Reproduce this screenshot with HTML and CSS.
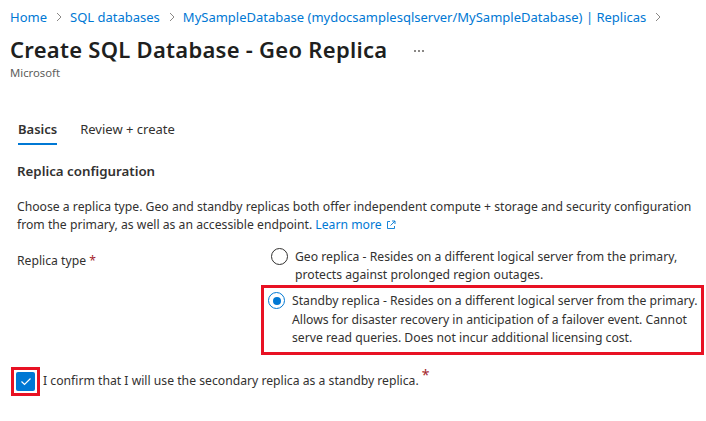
FILE: index.html
```html
<!DOCTYPE html>
<html lang="en">
<head>
<meta charset="utf-8">
<title>Create SQL Database - Geo Replica</title>
<link rel="stylesheet" href="styles.css">
</head>
<body>
<nav class="breadcrumb">
  <a href="#">Home</a>
  <svg class="chev" viewBox="0 0 8 10" width="8" height="10"><polyline points="2,1 6,5 2,9" fill="none" stroke="#8a8886" stroke-width="1"/></svg>
  <a href="#">SQL databases</a>
  <svg class="chev" viewBox="0 0 8 10" width="8" height="10"><polyline points="2,1 6,5 2,9" fill="none" stroke="#8a8886" stroke-width="1"/></svg>
  <a href="#">MySampleDatabase (mydocsamplesqlserver/MySampleDatabase) | Replicas</a>
  <svg class="chev" viewBox="0 0 8 10" width="8" height="10"><polyline points="2,1 6,5 2,9" fill="none" stroke="#8a8886" stroke-width="1"/></svg>
</nav>
<header class="title-row">
  <h1 class="title">Create SQL Database - Geo Replica</h1>
  <span class="more"><i></i><i></i><i></i></span>
</header>
<div class="publisher">Microsoft</div>

<div class="tabs">
  <span class="tab active">Basics</span>
  <span class="tab">Review + create</span>
</div>

<main class="content">
  <h2 class="section-title">Replica configuration</h2>
  <p class="desc">Choose a replica type. Geo and standby replicas both offer independent compute + storage and security configuration from the primary, as well as an accessible endpoint. <a href="#" class="link">Learn more<svg class="ext" viewBox="0 0 10 10" width="10" height="10"><path d="M4 1.5H1.5v7h7V6" fill="none" stroke="#0078d4" stroke-width="0.9"/><path d="M6 1h3v3M9 1L4.5 5.5" fill="none" stroke="#0078d4" stroke-width="0.9"/></svg></a></p>

  <div class="field">
    <div class="label">Replica type <span class="req">*</span></div>
    <div class="options">
      <label class="option">
        <span class="radio"></span>
        <span class="opt-text">Geo replica - Resides on a different logical server from the primary, protects against prolonged region outages.</span>
      </label>
      <label class="option highlight">
        <span class="radio checked"></span>
        <span class="opt-text">Standby replica - Resides on a different logical server from the primary. Allows for disaster recovery in anticipation of a failover event. Cannot serve read queries. Does not incur additional licensing cost.</span>
      </label>
    </div>
  </div>

  <div class="confirm">
    <span class="check-wrap"><span class="checkbox"><svg viewBox="0 0 18 18" width="18" height="18"><polyline points="4.5,9.5 7.5,12.5 13.5,6.5" fill="none" stroke="#fff" stroke-width="1.2"/></svg></span></span>
    <span class="confirm-text">I confirm that I will use the secondary replica as a standby replica.</span><span class="req sup">*</span>
  </div>
</main>
</body>
</html>
```

FILE: styles.css
```css
* { box-sizing: border-box; }
html, body { margin: 0; padding: 0; background: #fff; }
body {
  font-family: "Noto Sans", "Open Sans", sans-serif;
  font-size: 12.2px;
  color: #323130;
  width: 706px;
  height: 421px;
  overflow: hidden;
}
a { color: #0078d4; text-decoration: none; }

.breadcrumb {
  display: flex;
  align-items: center;
  padding: 8px 0 0 10px;
  height: 26px;
  font-size: 13px;
  line-height: 18px;
}
.breadcrumb .chev { margin: 0 7px 0 8px; }

.title-row {
  display: flex;
  align-items: center;
  padding-left: 10px;
  height: 36px;
  margin-top: 5px;
}
.title {
  margin: 0;
  font-size: 22px;
  font-weight: 600;
  letter-spacing: 0.27px;
  color: #201f1e;
  line-height: 30px;
}
.more {
  display: flex;
  gap: 2px;
  margin-left: 27px;
  margin-top: 4px;
}
.more i {
  display: block;
  width: 2px;
  height: 2px;
  background: #8a8886;
}
.publisher {
  padding-left: 10px;
  font-size: 11.3px;
  line-height: 16px;
  margin-top: -2px;
  color: #605e5c;
}

.tabs {
  display: flex;
  gap: 23px;
  margin-top: 37px;
  padding-left: 18px;
}
.tab {
  font-size: 13px;
  line-height: 18px;
  padding: 2px 0 5px;
  border-bottom: 2px solid transparent;
}
.tab.active {
  font-weight: 600;
  border-bottom-color: #0078d4;
}

.content { padding-left: 17px; }
.section-title {
  margin: 16px 0 0;
  font-size: 13.3px;
  font-weight: 600;
  line-height: 20px;
}
.desc {
  margin: 17px 0 0;
  line-height: 18px;
}
.ext { vertical-align: -1px; margin-left: 4px; }

.field {
  display: grid;
  grid-template-columns: 244px 1fr;
  margin-top: 14px;
}
.label { padding-top: 4px; line-height: 18px; }
.req { color: #a4262c; }
.options { display: flex; flex-direction: column; gap: 1px; }
.option {
  display: flex;
  align-items: flex-start;
  gap: 7px;
  padding: 0 4px 0 7px;
  border: 3px solid transparent;
  border-top-width: 0;
  border-bottom-width: 0;
  line-height: 18px;
}
.option.highlight {
  border: 3px solid #e81123;
  padding: 4px 1px 4px 4px;
  margin-right: 2px;
  line-height: 18.5px;
}
.radio {
  flex: none;
  width: 17px;
  height: 17px;
  border: 1px solid #323130;
  border-radius: 50%;
  margin-top: 0;
  position: relative;
}
.radio.checked { border-color: #0078d4; }
.radio.checked::after {
  content: "";
  position: absolute;
  left: 3.5px; top: 3.5px;
  width: 8px; height: 8px;
  border-radius: 50%;
  background: #0078d4;
}

.confirm {
  display: flex;
  align-items: center;
  margin-top: 12px;
  margin-left: -6px;
}
.check-wrap {
  border: 3px solid #e81123;
  padding: 2px;
  display: flex;
}
.checkbox {
  width: 19px;
  height: 19px;
  background: #0078d4;
  border-radius: 2px;
  display: flex;
  align-items: center;
  justify-content: center;
}
.confirm-text { margin-left: 3px; line-height: 18px; }
.req.sup { align-self: flex-start; margin-left: 3px; margin-top: -2px; font-size: 14px; }
```
